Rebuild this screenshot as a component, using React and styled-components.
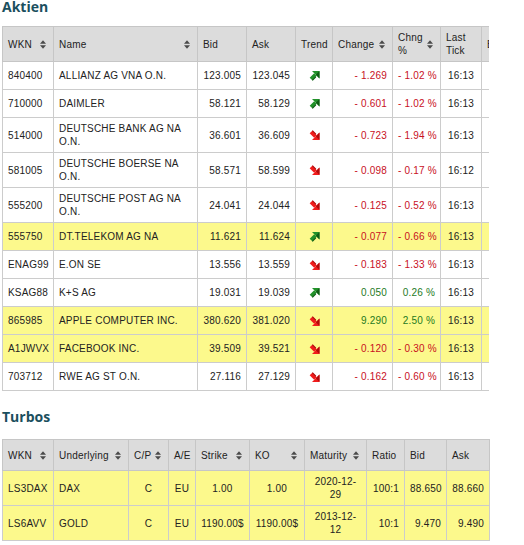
import React from "react";
import styled, { createGlobalStyle } from "styled-components";

const GlobalStyle = createGlobalStyle`
  html, body { margin: 0; padding: 0; background: #ffffff; }
  body { font-family: "Liberation Sans", Arial, sans-serif; font-size: 10px; color: #222; }
`;

const Page = styled.div`
  padding-left: 2px;
  width: 522px;
`;

const Section = styled.section`
  margin-top: ${(p) => p.$top}px;
`;

const Title = styled.h2`
  font-family: "Open Sans", "DejaVu Sans", sans-serif;
  font-weight: 700;
  font-size: 14px;
  line-height: 14px;
  color: #1b4f5e;
  margin: 0 0 ${(p) => p.$gap}px 0;
`;

const Clip = styled.div`
  width: 487px;
  overflow: hidden;
`;

const Table = styled.table`
  border-collapse: collapse;
  table-layout: fixed;
  width: ${(p) => p.$width}px;
  letter-spacing: 0.2px;
`;

const Th = styled.th`
  background: #dcdcdc;
  border: 1px solid #c6c6c6;
  padding: 4px 5px;
  height: ${(p) => p.$h}px;
  text-align: left;
  font-weight: 400;
  color: #222;
  line-height: 13px;
  vertical-align: middle;
`;

const HeadInner = styled.div`
  display: flex;
  align-items: center;
  justify-content: space-between;
  gap: 3px;
`;

const Row = styled.tr`
  background: ${(p) => (p.$hl ? "#fcf98c" : "#ffffff")};
`;

const Td = styled.td`
  border: 1px solid #cccccc;
  padding: 4px 5px;
  height: ${(p) => p.$h || 19}px;
  line-height: 13px;
  text-align: ${(p) => p.$align || "left"};
  color: ${(p) =>
    p.$tone === "neg" ? "#c8101e" : p.$tone === "pos" ? "#1e7a1e" : "#222"};
  white-space: ${(p) => (p.$nowrap ? "nowrap" : "normal")};
  vertical-align: middle;
`;

const Maturity = styled.span`
  display: inline-block;
  width: 44px;
`;

const SortIcon = () => (
  <svg width="6" height="9" viewBox="0 0 6 9" style={{ flex: "none", marginRight: 2 }}>
    <polygon points="0,3.8 3,0.3 6,3.8" fill="#4a4a4a" />
    <polygon points="0,5.2 6,5.2 3,8.7" fill="#4a4a4a" />
  </svg>
);

const TrendIcon = ({ up }) => (
  <svg
    width="11"
    height="10"
    viewBox="0 0 11 10"
    style={{ display: "block", margin: "0 auto", transform: up ? "none" : "scaleY(-1)" }}
  >
    <line x1="2" y1="8" x2="6.5" y2="3.5" stroke={up ? "#22922a" : "#f01c1c"} strokeWidth="3.8" />
    <polygon points="10.5,0 10.5,7.5 3,0" fill={up ? "#22922a" : "#f01c1c"} />
    <polygon points="10.5,0 10.5,7.5 6.8,3.8" fill={up ? "#0f5c14" : "#b00a0a"} />
    <line x1="3.3" y1="9.3" x2="6.8" y2="5.8" stroke={up ? "#0f5c14" : "#b00a0a"} strokeWidth="1.2" />
  </svg>
);

const Head = ({ children, sort, h }) => (
  <Th $h={h}>
    <HeadInner>
      <span>{children}</span>
      {sort && <SortIcon />}
    </HeadInner>
  </Th>
);

const stocks = [
  ["840400", "ALLIANZ AG VNA O.N.", "123.005", "123.045", true, "- 1.269", "- 1.02 %", "16:13", false],
  ["710000", "DAIMLER", "58.121", "58.129", true, "- 0.601", "- 1.02 %", "16:13", false],
  ["514000", "DEUTSCHE BANK AG NA O.N.", "36.601", "36.609", false, "- 0.723", "- 1.94 %", "16:13", false],
  ["581005", "DEUTSCHE BOERSE NA O.N.", "58.571", "58.599", false, "- 0.098", "- 0.17 %", "16:12", false],
  ["555200", "DEUTSCHE POST AG NA O.N.", "24.041", "24.044", false, "- 0.125", "- 0.52 %", "16:13", false],
  ["555750", "DT.TELEKOM AG NA", "11.621", "11.624", true, "- 0.077", "- 0.66 %", "16:13", true],
  ["ENAG99", "E.ON SE", "13.556", "13.559", false, "- 0.183", "- 1.33 %", "16:13", false],
  ["KSAG88", "K+S AG", "19.031", "19.039", true, "0.050", "0.26 %", "16:13", false],
  ["865985", "APPLE COMPUTER INC.", "380.620", "381.020", false, "9.290", "2.50 %", "16:13", true],
  ["A1JWVX", "FACEBOOK INC.", "39.509", "39.521", false, "- 0.120", "- 0.30 %", "16:13", true],
  ["703712", "RWE AG ST O.N.", "27.116", "27.129", false, "- 0.162", "- 0.60 %", "16:13", false],
];

const turbos = [
  ["LS3DAX", "DAX", "C", "EU", "1.00", "1.00", "2020-12-29", "100:1", "88.650", "88.660"],
  ["LS6AVV", "GOLD", "C", "EU", "1190.00$", "1190.00$", "2013-12-12", "10:1", "9.470", "9.490"],
];

const stockCols = [51, 144, 49, 49, 37, 60, 48, 41, 60];
const turboCols = [51, 75, 40, 27, 54, 55, 62, 38, 42, 43];
const sum = (a) => a.reduce((x, y) => x + y, 0);

export default function App() {
  return (
    <Page>
      <GlobalStyle />
      <Section $top={0}>
        <Title $gap={12}>Aktien</Title>
        <Clip>
          <Table $width={sum(stockCols)}>
            <colgroup>
              {stockCols.map((w, i) => (
                <col key={i} style={{ width: w }} />
              ))}
            </colgroup>
            <thead>
              <tr>
                <Head h={25} sort>WKN</Head>
                <Head h={25} sort>Name</Head>
                <Head h={25}>Bid</Head>
                <Head h={25}>Ask</Head>
                <Head h={25}>Trend</Head>
                <Head h={25} sort>Change</Head>
                <Head h={25} sort>Chng %</Head>
                <Head h={25}>Last Tick</Head>
                <Head h={25}>Bid Preis</Head>
              </tr>
            </thead>
            <tbody>
              {stocks.map((r) => {
                const tone = r[5].startsWith("-") ? "neg" : "pos";
                return (
                  <Row key={r[0]} $hl={r[8]}>
                    <Td>{r[0]}</Td>
                    <Td>{r[1]}</Td>
                    <Td $align="right">{r[2]}</Td>
                    <Td $align="right">{r[3]}</Td>
                    <Td $align="center">
                      <TrendIcon up={r[4]} />
                    </Td>
                    <Td $align="right" $tone={tone}>{r[5]}</Td>
                    <Td $align="right" $tone={tone} $nowrap>{r[6]}</Td>
                    <Td $align="center">{r[7]}</Td>
                    <Td $align="right"></Td>
                  </Row>
                );
              })}
            </tbody>
          </Table>
        </Clip>
      </Section>
      <Section $top={19}>
        <Title $gap={15}>Turbos</Title>
        <Table $width={sum(turboCols)}>
          <colgroup>
            {turboCols.map((w, i) => (
              <col key={i} style={{ width: w }} />
            ))}
          </colgroup>
          <thead>
            <tr>
              <Head h={22} sort>WKN</Head>
              <Head h={22} sort>Underlying</Head>
              <Head h={22} sort>C/P</Head>
              <Head h={22}>A/E</Head>
              <Head h={22} sort>Strike</Head>
              <Head h={22} sort>KO</Head>
              <Head h={22} sort>Maturity</Head>
              <Head h={22}>Ratio</Head>
              <Head h={22}>Bid</Head>
              <Head h={22}>Ask</Head>
            </tr>
          </thead>
          <tbody>
            {turbos.map((r) => (
              <Row key={r[0]} $hl>
                <Td $h={26}>{r[0]}</Td>
                <Td $h={26}>{r[1]}</Td>
                <Td $h={26} $align="center">{r[2]}</Td>
                <Td $h={26} $align="center">{r[3]}</Td>
                <Td $h={26} $align="center" $nowrap>{r[4]}</Td>
                <Td $h={26} $align="center" $nowrap>{r[5]}</Td>
                <Td $h={26} $align="center">
                  <Maturity>{r[6]}</Maturity>
                </Td>
                <Td $h={26} $align="right">{r[7]}</Td>
                <Td $h={26} $align="right">{r[8]}</Td>
                <Td $h={26} $align="right">{r[9]}</Td>
              </Row>
            ))}
          </tbody>
        </Table>
      </Section>
    </Page>
  );
}
